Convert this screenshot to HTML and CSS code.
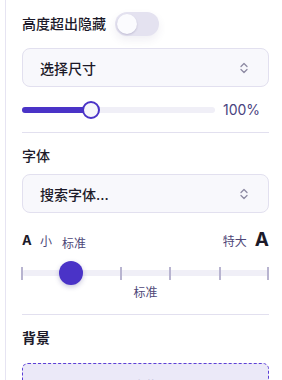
FILE: index.html
```html
<!DOCTYPE html>
<html lang="zh">
<head>
<meta charset="utf-8">
<link rel="stylesheet" href="styles.css">
</head>
<body>
<div class="panel">
  <div class="toggle-row">
    <span class="label">高度超出隐藏</span>
    <span class="toggle"><span class="knob"></span></span>
  </div>
  <div class="select select-size">
    <span>选择尺寸</span>
    <svg class="chev" width="10" height="16" viewBox="0 0 10 16"><path d="M2 6.5 L5 3.5 L8 6.5 M2 9.5 L5 12.5 L8 9.5" fill="none" stroke="#8e8ba3" stroke-width="1.3" stroke-linecap="round" stroke-linejoin="round"/></svg>
  </div>
  <div class="range-row">
    <div class="range">
      <div class="range-fill" style="width:68px"></div>
      <div class="range-thumb"></div>
    </div>
    <span class="pct">100%</span>
  </div>
  <div class="divider div-1"></div>
  <div class="section-title">字体</div>
  <div class="select select-font">
    <span>搜索字体...</span>
    <svg class="chev" width="10" height="16" viewBox="0 0 10 16"><path d="M2 6.5 L5 3.5 L8 6.5 M2 9.5 L5 12.5 L8 9.5" fill="none" stroke="#8e8ba3" stroke-width="1.3" stroke-linecap="round" stroke-linejoin="round"/></svg>
  </div>
  <div class="size-labels">
    <span class="a-small">A</span>
    <span class="muted small">小</span>
    <span class="muted std">标准</span>
    <span class="spacer"></span>
    <span class="muted big-label">特大</span>
    <span class="a-big">A</span>
  </div>
  <div class="steps">
    <div class="steps-track"></div>
    <span class="tick tick-first" style="left:0%"></span>
    <span class="tick" style="left:20%"></span>
    <span class="tick" style="left:40%"></span>
    <span class="tick" style="left:60%"></span>
    <span class="tick" style="left:80%"></span>
    <span class="tick tick-last" style="left:100%"></span>
    <span class="steps-thumb" style="left:20%"></span>
  </div>
  <div class="step-caption">标准</div>
  <div class="divider div-2"></div>
  <div class="section-title bg-title">背景</div>
  <div class="dropzone"><span>上传</span></div>
</div>
</body>
</html>
```
FILE: styles.css
```css
* { box-sizing: border-box; }
html, body { margin: 0; padding: 0; background: #ffffff; }
body {
  font-family: "Inter", "Noto Sans CJK SC", sans-serif;
  color: #1c1a29;
  width: 282px;
  height: 380px;
  overflow: hidden;
}
.panel {
  margin-left: 5px;
  border-left: 1px solid #e6e4f2;
  padding: 12px 13px 0 16px;
  height: 380px;
  display: flex;
  flex-direction: column;
}
.panel > * { flex-shrink: 0; }
.toggle-row {
  display: flex;
  align-items: center;
  height: 24px;
  gap: 9px;
}
.label {
  font-size: 14px;
  font-weight: 500;
  line-height: 20px;
}
.toggle {
  width: 44px;
  height: 24px;
  border-radius: 12px;
  background: #e4e2f0;
  padding: 2px;
  display: flex;
  box-shadow: 0 4px 8px rgba(60, 50, 120, 0.08);
}
.knob {
  width: 20px;
  height: 20px;
  border-radius: 50%;
  background: #fbfbfe;
  box-shadow: 0 1px 2px rgba(40, 30, 90, 0.2);
}
.select {
  height: 39px;
  border: 1px solid #e2e0ef;
  border-radius: 8px;
  background: #f8f8fc;
  display: flex;
  align-items: center;
  justify-content: space-between;
  padding: 0 19px 0 17px;
  font-size: 14px;
  font-weight: 500;
}
.select-size { margin-top: 12px; }
.range-row {
  margin-top: 14px;
  height: 18px;
  display: flex;
  align-items: center;
  gap: 8px;
}
.range {
  position: relative;
  width: 193px;
  height: 6px;
  border-radius: 3px;
  background: #f0eff7;
}
.range-fill {
  height: 6px;
  border-radius: 3px;
  background: #4a33c7;
}
.range-thumb {
  position: absolute;
  left: 60px;
  top: -6px;
  width: 18px;
  height: 18px;
  border-radius: 50%;
  border: 2px solid #4a33c7;
  background: #f6f6fb;
}
.pct {
  font-size: 14px;
  color: #4a4380;
  line-height: 18px;
}
.divider {
  height: 1px;
  background: #e2e0ef;
}
.div-1 { margin-top: 13px; }
.section-title {
  margin-top: 13px;
  font-size: 14px;
  font-weight: 500;
  line-height: 20px;
}
.select-font { margin-top: 8px; }
.size-labels {
  margin-top: 17px;
  height: 20px;
  display: flex;
  align-items: center;
}
.a-small {
  font-size: 13px;
  font-weight: 700;
  width: 18px;
}
.muted { color: #4d4777; font-size: 12px; }
.small { width: 22px; }
.std { padding-top: 5px; }
.spacer { flex: 1; }
.big-label { margin-right: 8px; }
.a-big {
  font-size: 19px;
  font-weight: 700;
  line-height: 20px;
}
.steps {
  position: relative;
  margin-top: 11px;
  height: 24px;
}
.steps-track {
  position: absolute;
  left: 0;
  right: 0;
  top: 9px;
  height: 6px;
  border-radius: 3px;
  background: #f0eff7;
}
.tick {
  position: absolute;
  top: 6px;
  width: 2px;
  height: 13px;
  margin-left: -1px;
  background: #b8b4d0;
}
.tick-first { margin-left: -1px; }
.tick-last { margin-left: -2px; }
.steps-thumb {
  position: absolute;
  top: 0;
  width: 24px;
  height: 24px;
  margin-left: -12px;
  border-radius: 50%;
  background: #4a33c7;
  box-shadow: 0 2px 5px rgba(40, 30, 120, 0.25);
}
.step-caption {
  text-align: center;
  font-size: 12px;
  color: #4d4777;
  line-height: 16px;
}
.div-2 { margin-top: 13px; }
.bg-title {
  margin-top: 13px;
  font-weight: 600;
}
.dropzone {
  margin-top: 15px;
  height: 60px;
  border: 1px dashed #5b3fd6;
  border-radius: 6px;
  background: #ebe9f8;
  display: flex;
  justify-content: center;
  padding-top: 12px;
  font-size: 12px;
  color: #c9c6dc;
}
```
